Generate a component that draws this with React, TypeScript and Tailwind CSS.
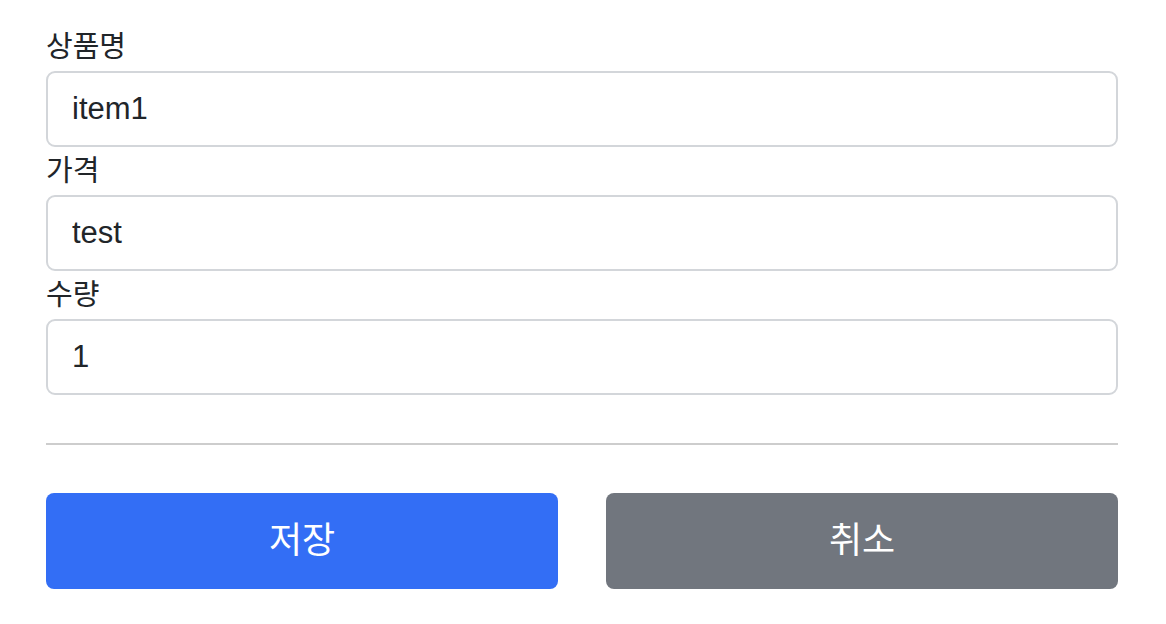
import React, { useState } from 'react';

interface IItem {
  itemName: string;
  price: string;
  quantity: string;
}

const initialItem: IItem = { itemName: 'item1', price: 'test', quantity: '1' };

const fontStack = "font-['Liberation_Sans','Noto_Sans_CJK_KR',sans-serif]";

const Field = ({ label, name, value, onChange }: { label: string; name: keyof IItem; value: string; onChange: (e: React.ChangeEvent<HTMLInputElement>) => void }) => (
  <div className="flex flex-col">
    <label htmlFor={name} className="h-[48px] text-[29px] leading-[48px] text-[#212529]">
      {label}
    </label>
    <input
      id={name}
      name={name}
      value={value}
      onChange={onChange}
      className={`h-[76px] w-full rounded-[9px] border-2 border-[#d3d6da] bg-white px-[24px] text-[31px] text-[#212529] outline-none ${fontStack}`}
    />
  </div>
);

const App = () => {
  const [item, setItem] = useState<IItem>(initialItem);
  const handleChangeInput = (e: React.ChangeEvent<HTMLInputElement>) => setItem({ ...item, [e.target.name]: e.target.value });

  return (
    <main className={`min-h-screen w-full bg-white pl-[46px] pr-[48px] pt-[23px] ${fontStack}`}>
      <form onSubmit={(e) => e.preventDefault()} className="flex flex-col">
        <Field label="상품명" name="itemName" value={item.itemName} onChange={handleChangeInput} />
        <Field label="가격" name="price" value={item.price} onChange={handleChangeInput} />
        <Field label="수량" name="quantity" value={item.quantity} onChange={handleChangeInput} />
        <hr className="mb-[48px] mt-[48px] h-[2px] border-0 bg-[#cdcdcd]" />
        <div className="grid grid-cols-2 gap-[48px]">
          <button type="submit" className="h-[96px] rounded-[8px] bg-[#336ef5] text-[36px] text-white">
            저장
          </button>
          <button type="button" className="h-[96px] rounded-[8px] bg-[#71767e] text-[36px] text-white">
            취소
          </button>
        </div>
      </form>
    </main>
  );
};

export default App;
